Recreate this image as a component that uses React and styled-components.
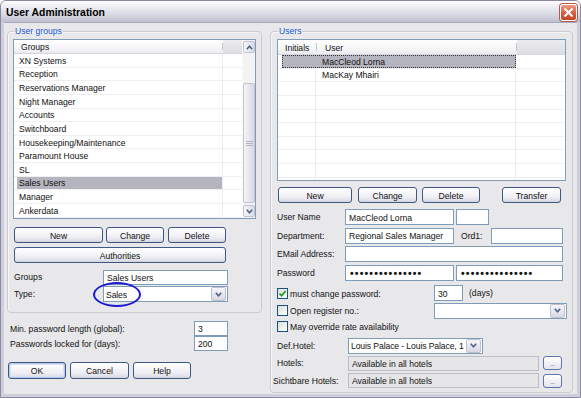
import React from 'react';
import styled, { createGlobalStyle, css } from 'styled-components';

//Global page reset
const GlobalStyle = createGlobalStyle`
	html, body {
		margin: 0;
		padding: 0;
		background: #ffffff;
	}
	body {
		font-family: "Liberation Sans", Arial, sans-serif;
		font-size: 8.6px;
		color: #111;
	}
	* {
		box-sizing: border-box;
	}
`;

//Window chrome
const WINDOW = styled.div`
	width: 581px;
	height: 398px;
	display: flex;
	flex-direction: column;
	border: 1px solid #8a8aa4;
	border-radius: 6px 6px 0 0;
	background: #cfcfdb;
	overflow: hidden;
`;
const TITLEBAR = styled.div`
	height: 21px;
	flex: none;
	display: flex;
	align-items: center;
	justify-content: space-between;
	padding: 0 3px 0 5px;
	background: linear-gradient(#fdfdfe, #e9e9f0 35%, #d2d2de 75%, #bdbdcd);
`;
const TITLE = styled.div`
	font-size: 10.4px;
	font-weight: bold;
	color: #000;
	padding-top: 1px;
`;
const CLOSE = styled.div`
	width: 17px;
	height: 17px;
	margin-top: 2px;
	border: 1px solid #fff;
	border-radius: 3px;
	background: linear-gradient(#ec9a84, #d8603f 55%, #c3432a);
	box-shadow: 0 0 0 1px #b35a4c;
	display: flex;
	align-items: center;
	justify-content: center;
`;
const BODY = styled.div`
	flex: 1;
	margin: 0 3px 3px;
	border-top: 1px solid #a9a9bd;
	background: #e8e8ea;
	padding: 3px 5px 0 3px;
	display: flex;
	gap: 8px;
	align-items: flex-start;
`;
const COLUMN = styled.div`
	width: ${(p) => p.$w}px;
	flex: none;
	display: flex;
	flex-direction: column;
`;

//Group boxes
const GROUPBOX = styled.fieldset`
	margin: 0;
	width: 100%;
	height: ${(p) => p.$h}px;
	border: 1px solid #cbcbd6;
	border-radius: 4px;
	padding: 2px ${(p) => p.$pr}px 0 ${(p) => p.$pl}px;
	box-shadow: inset 1px 1px 0 #f6f6f8;
	display: flex;
	flex-direction: column;
`;
const LEGEND = styled.legend`
	padding: 0 1px;
	margin-left: 1px;
	color: #1b5ad6;
	line-height: 11px;
`;

//List views
const LIST = styled.div`
	width: ${(p) => p.$w}px;
	height: ${(p) => p.$h}px;
	flex: none;
	border: 1px solid #7f9db9;
	background: #fff;
	display: flex;
	overflow: hidden;
`;
const LISTMAIN = styled.div`
	flex: 1;
	min-width: 0;
	display: flex;
	flex-direction: column;
	overflow: hidden;
`;
const HEADER = styled.div`
	height: ${(p) => p.$h}px;
	flex: none;
	display: flex;
	background: linear-gradient(#ffffff, #f7f7f9 55%, #ebebef);
	border-bottom: 1px solid #d6d6de;
`;
const HEADCELL = styled.div`
	width: ${(p) => p.$w}px;
	flex: none;
	display: flex;
	align-items: center;
	padding-left: ${(p) => p.$pad}px;
	padding-top: 1px;
	position: relative;
	&::after {
		content: '';
		position: absolute;
		right: 0;
		top: 3px;
		bottom: 3px;
		width: 1px;
		background: #c5c5cf;
	}
`;
const HEADBLANK = styled.div`
	flex: 1;
	background: linear-gradient(#ececef, #dcdce2);
`;
const ROW = styled.div`
	height: 13.64px;
	flex: none;
	display: flex;
	padding-left: ${(p) => p.$indent}px;
	border-bottom: 1px solid #efeff1;
`;
const ROWSEL = styled.div`
	display: flex;
	background: ${(p) => (p.$sel ? '#b5b5bf' : 'transparent')};
	${(p) =>
		p.$focus &&
		css`
			outline: 1px dotted #333;
			outline-offset: -1px;
		`}
`;
const CELL = styled.div`
	width: ${(p) => p.$w}px;
	flex: none;
	display: flex;
	align-items: center;
	padding-left: ${(p) => p.$pad}px;
	padding-top: 1px;
	white-space: nowrap;
	overflow: hidden;
	border-right: ${(p) => (p.$line ? '1px solid #ececef' : 'none')};
`;

//Scrollbar
const SCROLLBAR = styled.div`
	width: 13px;
	flex: none;
	display: flex;
	flex-direction: column;
	background: #f3f3f6;
	border-left: 1px solid #fafafc;
	padding: 1px 0;
`;
const SCROLLBTN = styled.div`
	height: 12px;
	flex: none;
	border: 1px solid #c2c2d0;
	border-radius: 2px;
	background: linear-gradient(90deg, #f5f5f9, #dcdce6);
	display: flex;
	align-items: center;
	justify-content: center;
`;
const TRACK = styled.div`
	flex: 1;
	display: flex;
	flex-direction: column;
	padding: 30px 0 2px;
`;
const THUMB = styled.div`
	flex: 1;
	border: 1px solid #c2c2d0;
	border-radius: 2px;
	background: linear-gradient(90deg, #f4f4f8, #dadae4);
	display: flex;
	align-items: center;
	justify-content: center;
`;

//Buttons
const BUTTONROW = styled.div`
	display: flex;
	margin-top: ${(p) => p.$mt || 0}px;
	margin-left: ${(p) => p.$ml || 0}px;
`;
const BUTTON = styled.div`
	width: ${(p) => p.$w}px;
	height: ${(p) => p.$h || 16}px;
	flex: none;
	margin-left: ${(p) => p.$ml || 0}px;
	border: 1px solid #3d5885;
	border-radius: 3px;
	background: linear-gradient(#ffffff, #f5f5f8 45%, #e6e6ee 80%, #d3d3de);
	display: flex;
	align-items: center;
	justify-content: center;
	padding-top: 1px;
	${(p) =>
		p.$default &&
		css`
			box-shadow: inset 0 0 0 1px #b4c8ec, inset 0 0 0 2px #d6e2f6;
		`}
`;
const DOTS = styled.div`
	width: 19px;
	height: 14px;
	flex: none;
	margin-left: 4px;
	border: 1px solid #5a76a8;
	border-radius: 3px;
	background: linear-gradient(#ffffff, #e4e4ee);
	color: #707080;
	font-size: 7px;
	display: flex;
	align-items: flex-end;
	justify-content: center;
	padding-bottom: 2px;
	letter-spacing: -0.5px;
`;

//Form fields
const FIELDROW = styled.div`
	display: flex;
	align-items: center;
	height: ${(p) => p.$h || 16}px;
	margin-top: ${(p) => p.$mt || 0}px;
	margin-left: ${(p) => p.$ml || 0}px;
	flex: none;
`;
const LABEL = styled.div`
	width: ${(p) => p.$w}px;
	flex: none;
	white-space: nowrap;
	padding-left: ${(p) => p.$pad || 0}px;
`;
const TEXTBOX = styled.div`
	width: ${(p) => p.$w}px;
	height: ${(p) => p.$h || 16}px;
	flex: none;
	margin-left: ${(p) => p.$ml || 0}px;
	border: 1px solid ${(p) => (p.$ro ? '#bcbcc6' : '#7f9db9')};
	background: ${(p) => (p.$ro ? '#e6e6e8' : '#ffffff')};
	display: flex;
	align-items: center;
	padding-left: 3px;
	padding-top: 1px;
	white-space: nowrap;
	overflow: hidden;
`;
const COMBOWRAP = styled.div`
	position: relative;
	flex: none;
	display: flex;
`;
const COMBOBOX = styled(TEXTBOX)`
	padding-left: 2px;
	padding-right: 1px;
	padding-top: 0;
`;
const SECRET = styled.span`
	font-size: 10.5px;
	font-weight: bold;
	letter-spacing: 1.15px;
	padding-left: 1px;
`;
const COMBOTEXT = styled.span`
	flex: 1;
	overflow: hidden;
	white-space: nowrap;
	padding-top: 1px;
	letter-spacing: -0.1px;
`;
const COMBOARROW = styled.div`
	width: 15px;
	height: 14px;
	flex: none;
	border: 1px solid #bcc2d2;
	border-radius: 2px;
	background: linear-gradient(#f6f6fa, #d8d8e4);
	display: flex;
	align-items: center;
	justify-content: center;
`;
const HINT = styled.span`
	position: absolute;
	left: -10px;
	top: -4px;
	width: 48px;
	height: 25px;
	border: 2px solid #1a1ad2;
	border-radius: 50%;
	pointer-events: none;
`;

//Checkboxes
const CHECK = styled.span`
	width: 11px;
	height: 11px;
	flex: none;
	border: 1px solid #1c5180;
	background: linear-gradient(135deg, #dcdcd6, #ffffff);
	display: flex;
	align-items: center;
	justify-content: center;
`;
const CHECKTEXT = styled.span`
	width: ${(p) => (p.$w ? p.$w + 'px' : 'auto')};
	flex: none;
	padding-left: 2px;
	padding-top: 1px;
	white-space: nowrap;
`;

//Small drawings
const Chevron = ({ up }) => (
	<svg width="7" height="5" viewBox="0 0 7 5">
		<path
			d={up ? 'M0.8 4.2 L3.5 1.2 L6.2 4.2' : 'M0.8 0.8 L3.5 3.8 L6.2 0.8'}
			fill="none"
			stroke="#4d6185"
			strokeWidth="1.6"
		/>
	</svg>
);
const Grip = () => (
	<svg width="7" height="5" viewBox="0 0 7 5">
		<path d="M0 0.5 H7 M0 2.5 H7 M0 4.5 H7" stroke="#b4b4c4" strokeWidth="1" />
	</svg>
);
const Tick = () => (
	<svg width="9" height="9" viewBox="0 0 9 9">
		<path d="M1.5 4.5 L3.6 6.7 L7.6 2" fill="none" stroke="#21a121" strokeWidth="1.8" />
	</svg>
);

const Combo = ({ w, children, hint }) => (
	<COMBOWRAP>
		<COMBOBOX $w={w}>
			<COMBOTEXT>{children}</COMBOTEXT>
			<COMBOARROW>
				<Chevron />
			</COMBOARROW>
		</COMBOBOX>
		{hint && <HINT />}
	</COMBOWRAP>
);

const groups = [
	'XN Systems',
	'Reception',
	'Reservations Manager',
	'Night Manager',
	'Accounts',
	'Switchboard',
	'Housekeeping/Maintenance',
	'Paramount House',
	'SL',
	'Sales Users',
	'Manager',
	'Ankerdata',
];

const users = ['MacCleod Lorna', 'MacKay Mhairi', '', '', '', '', '', '', '', ''];

const App = () => {
	return (
		<>
			<GlobalStyle />
			<WINDOW>
				<TITLEBAR>
					<TITLE>User Administration</TITLE>
					<CLOSE>
						<svg width="11" height="11" viewBox="0 0 11 11">
							<path d="M1.5 1.5 L9.5 9.5 M9.5 1.5 L1.5 9.5" stroke="#fff" strokeWidth="2" />
						</svg>
					</CLOSE>
				</TITLEBAR>
				<BODY>
					<COLUMN $w={255}>
						<GROUPBOX $h={287} $pl={5} $pr={5}>
							<LEGEND>User groups</LEGEND>
							<LIST $w={243} $h={180}>
								<LISTMAIN>
									<HEADER $h={14}>
										<HEADCELL $w={209} $pad={7}>
											Groups
										</HEADCELL>
										<HEADBLANK />
									</HEADER>
									{groups.map((g) => (
										<ROW key={g} $indent={3}>
											<ROWSEL $sel={g === 'Sales Users'}>
												<CELL $w={205} $pad={2}>
													{g}
												</CELL>
											</ROWSEL>
											<CELL $w={1} $pad={0} $line />
										</ROW>
									))}
								</LISTMAIN>
								<SCROLLBAR>
									<SCROLLBTN>
										<Chevron up />
									</SCROLLBTN>
									<TRACK>
										<THUMB>
											<Grip />
										</THUMB>
									</TRACK>
									<SCROLLBTN>
										<Chevron />
									</SCROLLBTN>
								</SCROLLBAR>
							</LIST>
							<BUTTONROW $mt={8} $ml={1}>
								<BUTTON $w={89}>New</BUTTON>
								<BUTTON $w={58} $ml={3}>
									Change
								</BUTTON>
								<BUTTON $w={58} $ml={4}>
									Delete
								</BUTTON>
							</BUTTONROW>
							<BUTTONROW $mt={4} $ml={1}>
								<BUTTON $w={212}>Authorities</BUTTON>
							</BUTTONROW>
							<FIELDROW $mt={6} $ml={1}>
								<LABEL $w={89}>Groups</LABEL>
								<TEXTBOX $w={125} $h={15}>
									Sales Users
								</TEXTBOX>
							</FIELDROW>
							<FIELDROW $mt={1} $ml={1}>
								<LABEL $w={89}>Type:</LABEL>
								<Combo w={125} hint>
									Sales
								</Combo>
							</FIELDROW>
						</GROUPBOX>
						<FIELDROW $mt={8} $h={15}>
							<LABEL $w={187} $pad={3}>
								Min. password length (global):
							</LABEL>
							<TEXTBOX $w={34} $h={15}>
								3
							</TEXTBOX>
						</FIELDROW>
						<FIELDROW $h={15}>
							<LABEL $w={187} $pad={3}>
								Passwords locked for (days):
							</LABEL>
							<TEXTBOX $w={34} $h={15}>
								200
							</TEXTBOX>
						</FIELDROW>
						<BUTTONROW $mt={11} $ml={1}>
							<BUTTON $w={58} $h={17} $default>
								OK
							</BUTTON>
							<BUTTON $w={59} $h={17} $ml={4}>
								Cancel
							</BUTTON>
							<BUTTON $w={58} $h={17} $ml={4}>
								Help
							</BUTTON>
						</BUTTONROW>
					</COLUMN>

					<COLUMN $w={302}>
						<GROUPBOX $h={367} $pl={6} $pr={5}>
							<LEGEND>Users</LEGEND>
							<LIST $w={289} $h={142}>
								<LISTMAIN>
									<HEADER $h={15}>
										<HEADCELL $w={39} $pad={7}>
											Initials
										</HEADCELL>
										<HEADCELL $w={200} $pad={8}>
											User
										</HEADCELL>
										<HEADBLANK />
									</HEADER>
									{users.map((u, i) => (
										<ROW key={i} $indent={4}>
											<ROWSEL $sel={i === 0} $focus={i === 0}>
												<CELL $w={34} $pad={0} $line={i !== 0} />
												<CELL $w={200} $pad={6} $line={i !== 0}>
													{u}
												</CELL>
											</ROWSEL>
										</ROW>
									))}
								</LISTMAIN>
							</LIST>
							<BUTTONROW $mt={6} $ml={1}>
								<BUTTON $w={74}>New</BUTTON>
								<BUTTON $w={59} $ml={6}>
									Change
								</BUTTON>
								<BUTTON $w={58} $ml={5}>
									Delete
								</BUTTON>
								<BUTTON $w={59} $ml={22}>
									Transfer
								</BUTTON>
							</BUTTONROW>
							<FIELDROW $mt={6}>
								<LABEL $w={68}>User Name</LABEL>
								<TEXTBOX $w={109}>MacCleod Lorna</TEXTBOX>
								<TEXTBOX $w={33} $ml={2} />
							</FIELDROW>
							<FIELDROW $mt={2.5}>
								<LABEL $w={68}>Department:</LABEL>
								<TEXTBOX $w={109}>Regional Sales Manager</TEXTBOX>
								<LABEL $w={37} $pad={7}>
									Ord1:
								</LABEL>
								<TEXTBOX $w={72} />
							</FIELDROW>
							<FIELDROW $mt={2.5}>
								<LABEL $w={68}>EMail Address:</LABEL>
								<TEXTBOX $w={218} />
							</FIELDROW>
							<FIELDROW $mt={2.5}>
								<LABEL $w={68}>Password</LABEL>
								<TEXTBOX $w={109}>
									<SECRET>•••••••••••••••</SECRET>
								</TEXTBOX>
								<TEXTBOX $w={107} $ml={2}>
									<SECRET>•••••••••••••••</SECRET>
								</TEXTBOX>
							</FIELDROW>
							<FIELDROW $mt={4.5}>
								<CHECK>
									<Tick />
								</CHECK>
								<CHECKTEXT $w={146}>must change password:</CHECKTEXT>
								<TEXTBOX $w={29}>30</TEXTBOX>
								<LABEL $w={40} $pad={6}>
									(days)
								</LABEL>
							</FIELDROW>
							<FIELDROW $mt={1.5}>
								<CHECK />
								<CHECKTEXT $w={146}>Open register no.:</CHECKTEXT>
								<Combo w={133} />
							</FIELDROW>
							<FIELDROW $h={15}>
								<CHECK />
								<CHECKTEXT>May override rate availability</CHECKTEXT>
							</FIELDROW>
							<FIELDROW $mt={4}>
								<LABEL $w={71}>Def.Hotel:</LABEL>
								<Combo w={135}>Louis Palace - Louis Palace, 1</Combo>
							</FIELDROW>
							<FIELDROW $mt={2} $h={15}>
								<LABEL $w={71}>Hotels:</LABEL>
								<TEXTBOX $w={191} $h={15} $ro>
									Available in all hotels
								</TEXTBOX>
								<DOTS>...</DOTS>
							</FIELDROW>
							<FIELDROW $mt={2.5} $h={15} $ml={-4}>
								<LABEL $w={75}>Sichtbare Hotels:</LABEL>
								<TEXTBOX $w={191} $h={15} $ro>
									Available in all hotels
								</TEXTBOX>
								<DOTS>...</DOTS>
							</FIELDROW>
						</GROUPBOX>
					</COLUMN>
				</BODY>
			</WINDOW>
		</>
	);
};

export default App;
